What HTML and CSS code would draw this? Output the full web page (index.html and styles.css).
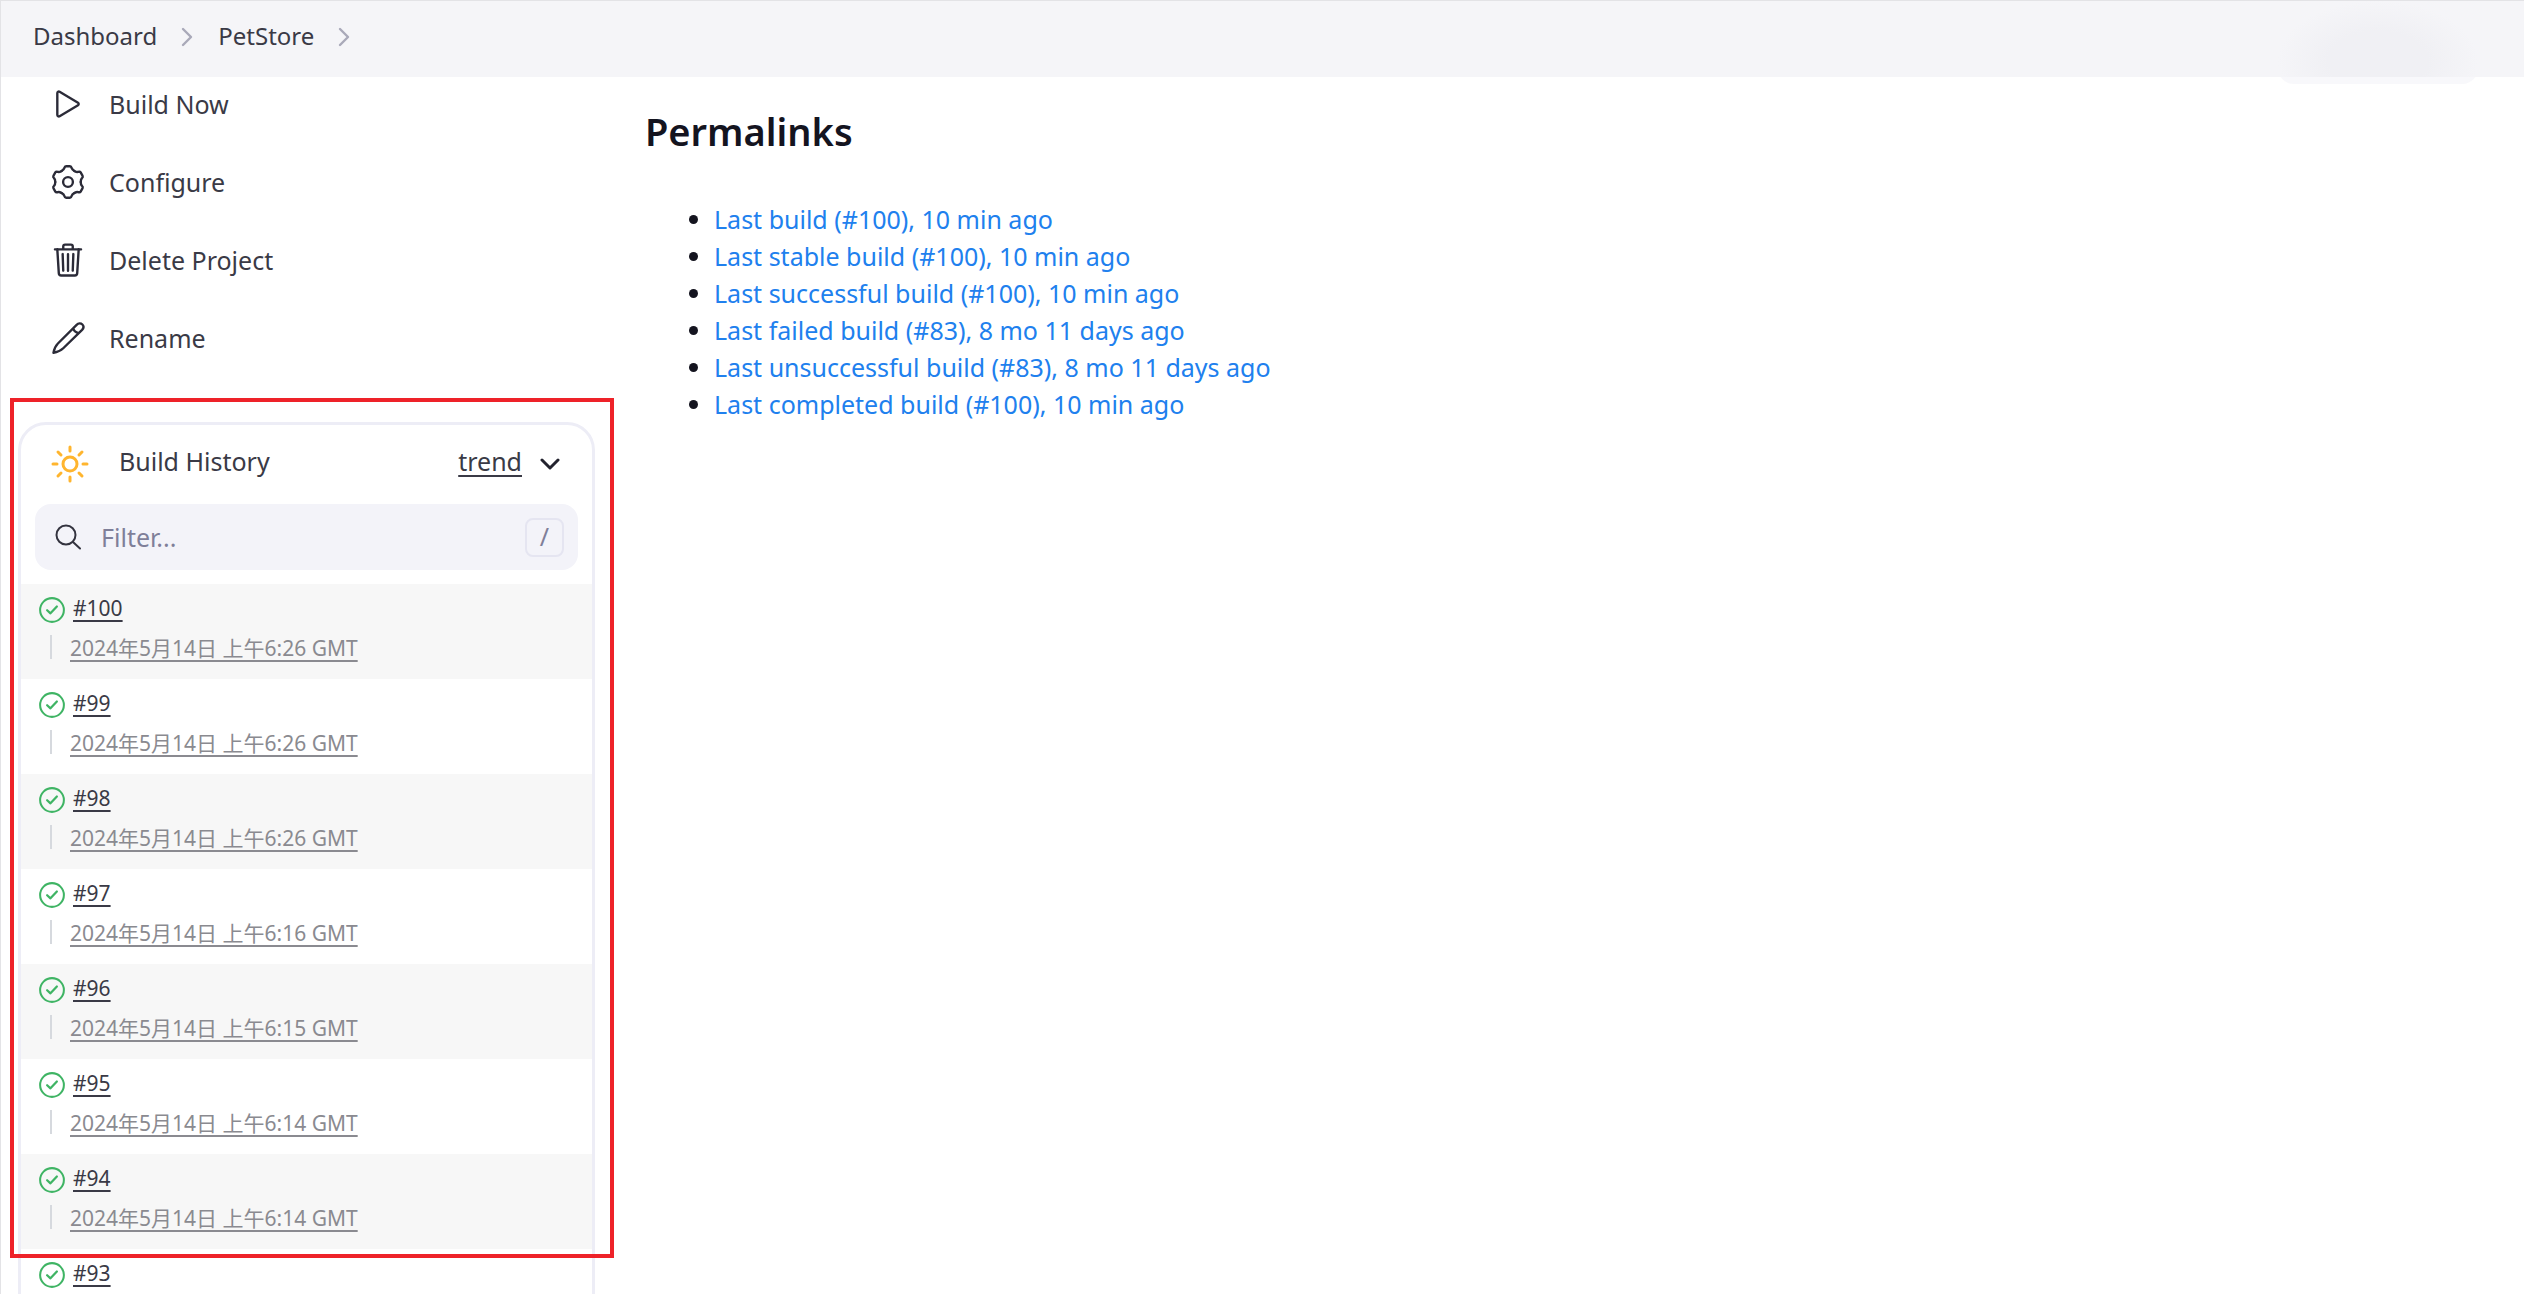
FILE: index.html
```html
<!DOCTYPE html>
<html lang="en">
<head>
<meta charset="utf-8">
<title>PetStore</title>
<link rel="stylesheet" href="styles.css">
</head>
<body>
<svg class="sprite" aria-hidden="true">
  <symbol id="chevron" viewBox="0 0 12 20"><path d="M2 2l8 8-8 8" fill="none" stroke="currentColor" stroke-width="2.4" stroke-linecap="round" stroke-linejoin="round"/></symbol>
  <symbol id="success" viewBox="0 0 512 512"><circle cx="256" cy="256" r="234" fill="none" stroke="currentColor" stroke-width="40"/><path d="M352 186L226 322l-66-62" fill="none" stroke="currentColor" stroke-width="44" stroke-linecap="round" stroke-linejoin="round"/></symbol>
  <symbol id="tooth" viewBox="0 0 512 512"><path d="M170 107Q200 90 206 70Q212 44 230 44H282Q300 44 306 70Q312 90 342 107"/></symbol>
</svg>
<header class="topbar">
  <nav aria-label="Breadcrumb">
    <ol class="breadcrumbs">
      <li><a href="#">Dashboard</a><svg class="crumb-arrow"><use href="#chevron"/></svg></li>
      <li><a href="#">PetStore</a><svg class="crumb-arrow"><use href="#chevron"/></svg></li>
    </ol>
  </nav>
  <div class="account-shade"></div>
</header>
<div class="layout">
  <aside class="side-panel">
    <nav class="tasks">
      <a class="task" href="#"><svg class="task-icon" viewBox="0 0 512 512"><path d="M112 111v290c0 17.440 17 28.520 31 20.160l247.900-148.370c12.120-7.250 12.120-26.330 0-33.580L143 90.840c-14-8.360-31 2.720-31 20.160z"/></svg>Build Now</a>
      <a class="task" href="#"><svg class="task-icon" viewBox="0 0 512 512"><circle cx="256" cy="256" r="66"/><use href="#tooth"/><use href="#tooth" transform="rotate(60 256 256)"/><use href="#tooth" transform="rotate(120 256 256)"/><use href="#tooth" transform="rotate(180 256 256)"/><use href="#tooth" transform="rotate(240 256 256)"/><use href="#tooth" transform="rotate(300 256 256)"/></svg>Configure</a>
      <a class="task" href="#"><svg class="task-icon" viewBox="0 0 512 512"><path d="M112 112l20 320c.95 18.490 14.400 32 32 32h184c17.670 0 30.870-13.510 32-32l20-320"/><path d="M80 112h352M192 112V72c0-14 10-24 24-24h80c14 0 24 10 24 24v40M256 176v224M184 176l8 224M328 176l-8 224"/></svg>Delete Project</a>
      <a class="task" href="#"><svg class="task-icon" viewBox="0 0 512 512"><path d="M60 456C70 400 90 360 120 330L372 78C395 55 430 55 450 74C468 92 468 122 446 146L192 394C160 425 120 445 60 456ZM326 124Q336 172 396 190"/></svg>Rename</a>
    </nav>
    <section class="history">
      <div class="history-head">
        <svg class="sun" viewBox="0 0 38 38"><circle cx="19" cy="19" r="7"/><path d="M19 2v4M19 32v4M2 19h4M32 19h4M7 7l3 3M28 28l3 3M7 31l3-3M28 10l3-3"/></svg>
        <h2>Build History</h2>
        <a class="trend" href="#">trend</a>
        <button class="collapse" aria-label="Collapse build history"><svg viewBox="0 0 20 12"><path d="M2 2l8 8 8-8"/></svg></button>
      </div>
      <label class="filter">
        <svg viewBox="0 0 26 26"><circle cx="11" cy="11" r="9.500"/><path d="M18 18l7 6.500"/></svg>
        <input type="text" placeholder="Filter..." aria-label="Filter builds">
        <kbd>/</kbd>
      </label>
      <ul class="builds">
        <li><div class="build"><svg><use href="#success"/></svg><a href="#">#100</a></div><div class="when"><a href="#">2024年5月14日 上午6:26 GMT</a></div></li>
        <li><div class="build"><svg><use href="#success"/></svg><a href="#">#99</a></div><div class="when"><a href="#">2024年5月14日 上午6:26 GMT</a></div></li>
        <li><div class="build"><svg><use href="#success"/></svg><a href="#">#98</a></div><div class="when"><a href="#">2024年5月14日 上午6:26 GMT</a></div></li>
        <li><div class="build"><svg><use href="#success"/></svg><a href="#">#97</a></div><div class="when"><a href="#">2024年5月14日 上午6:16 GMT</a></div></li>
        <li><div class="build"><svg><use href="#success"/></svg><a href="#">#96</a></div><div class="when"><a href="#">2024年5月14日 上午6:15 GMT</a></div></li>
        <li><div class="build"><svg><use href="#success"/></svg><a href="#">#95</a></div><div class="when"><a href="#">2024年5月14日 上午6:14 GMT</a></div></li>
        <li><div class="build"><svg><use href="#success"/></svg><a href="#">#94</a></div><div class="when"><a href="#">2024年5月14日 上午6:14 GMT</a></div></li>
        <li><div class="build"><svg><use href="#success"/></svg><a href="#">#93</a></div></li>
      </ul>
      <div class="highlight"></div>
    </section>
  </aside>
  <main class="content">
    <h1>Permalinks</h1>
    <ul class="permalinks">
      <li><a href="#">Last build (#100), 10 min ago</a></li>
      <li><a href="#">Last stable build (#100), 10 min ago</a></li>
      <li><a href="#">Last successful build (#100), 10 min ago</a></li>
      <li><a href="#">Last failed build (#83), 8 mo 11 days ago</a></li>
      <li><a href="#">Last unsuccessful build (#83), 8 mo 11 days ago</a></li>
      <li><a href="#">Last completed build (#100), 10 min ago</a></li>
    </ul>
  </main>
</div>
</body>
</html>
```
FILE: styles.css
```css
* { box-sizing: border-box; }

body {
  margin: 0;
  height: 100vh;
  overflow: hidden;
  display: flex;
  flex-direction: column;
  border-top: 1px solid #e3e3e6;
  border-left: 1px solid #e3e3e6;
  background: #fff;
  color: #3a3a46;
  font-family: "Noto Sans", "Noto Sans CJK SC", sans-serif;
  font-size: 25px;
}

a { color: inherit; text-decoration: none; }
ul, ol { margin: 0; padding: 0; list-style: none; }
h1, h2 { margin: 0; }
.sprite { display: none; }

.topbar {
  position: relative;
  flex: none;
  height: 76px;
  padding-left: 32px;
  display: flex;
  align-items: center;
  background: #f5f5f8;
}
.breadcrumbs { display: flex; font-size: 24px; line-height: 32px; padding-bottom: 6px; }
.breadcrumbs li { display: flex; align-items: center; }
.crumb-arrow { width: 12px; height: 20px; margin: 2px 25px 0 24px; color: #a9a9b9; }
.account-shade {
  position: absolute;
  right: 46px;
  top: 0;
  width: 200px;
  height: 83px;
  border-radius: 0 0 16px 16px;
  background:
    linear-gradient(transparent 76px, #f8f8fb 76px),
    radial-gradient(ellipse 100px 60px at 50% 60px, #f0f0f4, #f0f0f4 50%, #f5f5f8);
}

.layout {
  flex: 1;
  min-height: 0;
  display: grid;
  grid-template-columns: 577px 1fr;
  column-gap: 50px;
  padding-left: 17px;
}

.tasks { display: flex; flex-direction: column; margin-top: -12px; }
.task { display: flex; align-items: center; gap: 22px; height: 78px; padding-left: 31px; }
.task-icon {
  width: 38px;
  height: 38px;
  fill: none;
  stroke: #2b2b38;
  stroke-width: 32;
  stroke-linecap: round;
  stroke-linejoin: round;
}

.history {
  position: relative;
  margin-top: 45px;
  border: 3px solid #ededf6;
  border-radius: 28px 28px 0 0;
}
.history-head { display: flex; align-items: center; height: 79px; padding: 0 32px 2px 30px; }
.history-head h2 { flex: 1; margin-left: 30px; padding-bottom: 6px; font-size: 25px; font-weight: 400; }
.sun { width: 38px; height: 38px; fill: none; stroke: #ffb52e; stroke-width: 3; stroke-linecap: round; }
.trend { padding-bottom: 6px; text-decoration: underline; text-decoration-thickness: 2px; text-underline-offset: 4px; }
.collapse { display: flex; margin-left: 18px; padding: 0; border: 0; background: none; }
.collapse svg { width: 20px; height: 12px; fill: none; stroke: #22222e; stroke-width: 3; stroke-linecap: round; stroke-linejoin: round; }

.filter {
  display: flex;
  align-items: center;
  gap: 20px;
  height: 66px;
  margin: 0 14px 14px;
  padding: 0 14px 0 20px;
  border-radius: 16px;
  background: #f3f3f9;
}
.filter svg { width: 26px; height: 26px; fill: none; stroke: #33333f; stroke-width: 2; stroke-linecap: round; }
.filter input { flex: 1; min-width: 0; padding: 0; border: 0; outline: 0; background: none; font: inherit; }
.filter input::placeholder { color: #7f7f99; opacity: 1; }
.filter kbd {
  width: 39px;
  height: 39px;
  border: 2px solid #e5e5f1;
  border-radius: 8px;
  color: #7f7f99;
  font: 25px/33px "Noto Sans", sans-serif;
  text-align: center;
}

.builds { font-size: 21px; }
.builds li { height: 95px; padding: 8px 0 0 18px; }
.builds li:nth-child(odd) { background: #f7f7f7; }
.builds a { text-decoration: underline; text-decoration-thickness: 2px; text-underline-offset: 4px; }
.build { display: flex; align-items: center; gap: 8px; height: 32px; }
.build svg { width: 26px; height: 26px; margin-top: 4px; color: #3fb464; }
.when {
  display: flex;
  align-items: center;
  height: 24px;
  margin: 11px 0 0 11px;
  padding-left: 18px;
  border-left: 2px solid #d6d9de;
  color: #8a8a90;
}

.highlight {
  position: absolute;
  top: -27px;
  left: -11px;
  right: -22px;
  height: 860px;
  border: 4px solid #ee2229;
  pointer-events: none;
}

.content { padding-top: 30px; }
.content h1 { font-size: 38px; line-height: 48px; font-weight: 600; color: #14141f; }
.permalinks { margin-top: 46px; padding-left: 69px; list-style: disc; font-size: 25px; line-height: 37px; color: #14141f; }
.permalinks a { color: #2080ee; }
```
